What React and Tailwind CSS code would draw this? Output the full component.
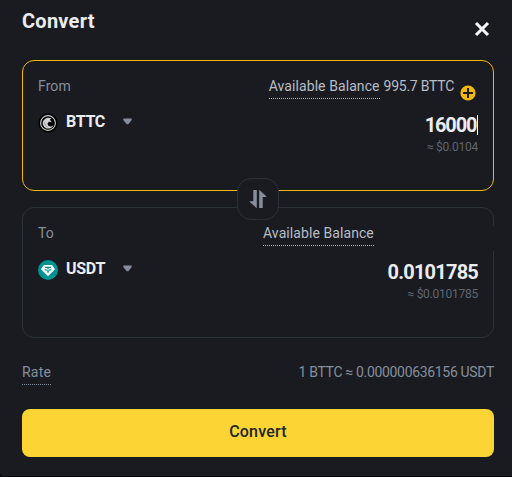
import React, { useState } from "react";

function BttcIcon() {
  return (
    <svg width="20" height="20" viewBox="0 0 20 20" fill="none" className="shrink-0">
      <circle cx="10" cy="10" r="9.7" fill="#020203" />
      <circle cx="10" cy="10" r="7.4" stroke="#c9c9cb" strokeWidth="1.1" />
      <path
        d="M13.6 5.500C11 4 8 4.600 6.500 6.400C5 7.500 4.300 9.500 4.900 11.400C5.700 14 8 15.800 10.800 15.600C13.200 15.400 15 13.900 15.300 12.300C13.500 14 10.800 13.800 9.900 12C9.200 10.500 9.700 9.300 11 8.900C12.200 8.500 13 9 13.200 9.800C13.800 8.600 13.100 7.200 11.600 6.900C12.200 6.300 13 5.900 13.600 5.500Z"
        fill="#d2d2d4"
      />
      <path d="M6.700 8.800C6.300 11.200 7.600 13.200 9.600 14.100" stroke="#77777a" strokeWidth="0.6" />
    </svg>
  );
}

function UsdtIcon() {
  return (
    <svg width="20" height="20" viewBox="0 0 20 20" fill="none" className="shrink-0">
      <circle cx="10" cy="10" r="10" fill="#009393" />
      <path d="M5.900 4.900H14.100L17 9.300L10 16.300L3 9.300Z" fill="#fff" />
      <path d="M7 6.700H13V8H10.700V9C12.500 9.100 13.600 9.400 13.600 9.900C13.600 10.400 12.500 10.700 10.700 10.800V12.700H9.300V10.800C7.500 10.700 6.400 10.400 6.400 9.900C6.400 9.400 7.500 9.100 9.300 9V8H7Z" fill="#009393" />
      <ellipse cx="10" cy="9.800" rx="2.500" ry="0.500" fill="#fff" />
    </svg>
  );
}

function Caret() {
  return (
    <svg width="9" height="7" viewBox="0 0 9 7" className="mb-1 shrink-0">
      <path d="M0.300 0.500H8.700V2L5.300 6.300H3.700L0.300 2Z" fill="#848e9c" />
    </svg>
  );
}

function SwapIcon() {
  return (
    <svg width="18" height="20" viewBox="0 0 18 20" fill="#848e9c">
      <path d="M4.300 1H7.800V19.300L0.800 13V12.200H4.300Z" />
      <path d="M10.200 0.700L17.300 7.200V8H13.700V19H10.200Z" />
    </svg>
  );
}

function CoinSelect({ icon, symbol }) {
  return (
    <button className="flex h-5 items-center">
      {icon}
      <span className="mb-[2px] ml-2 w-[57px] text-left text-base leading-5 font-bold tracking-[-0.3px] text-[#eaecef]">{symbol}</span>
      <Caret />
    </button>
  );
}

export default function App() {
  const [amount] = useState("16000");

  return (
    <div className="h-[477px] w-[512px] overflow-hidden bg-[#08080b] font-['Roboto','Liberation_Sans',sans-serif]">
      <div className="flex h-[476px] flex-col rounded-bl-[3px] bg-[#1a1b20] pr-[18px] pl-[22px]">
        {/* Header */}
        <div className="flex h-[60px] items-start justify-between">
          <h1 className="pt-[9px] text-xl leading-6 font-bold tracking-[0.25px] text-[#eaecef]">Convert</h1>
          <button className="mt-[21px] mr-1" aria-label="Close">
            <svg width="16" height="16" viewBox="0 0 16 16" fill="none">
              <path d="M2 2L14 14M14 2L2 14" stroke="#f4f5f6" strokeWidth="3.100" />
            </svg>
          </button>
        </div>

        {/* From */}
        <section className="h-[131px] shrink-0 rounded-xl border border-[#f0b90b] px-[15px] pt-[15px]">
          <div className="flex h-[37px] items-start justify-between text-sm leading-5">
            <span className="tracking-[0.1px] text-[#848e9c]">From</span>
            <div className="flex items-start text-[#b7bdc6]">
              <span className="border-b border-dotted border-[#b7bdc6] pb-[2px] tracking-[0.08px]">Available Balance</span>
              <span className="ml-1 tracking-[-0.25px]">995.7 BTTC</span>
              <svg width="16" height="16" viewBox="0 0 16 16" className="mt-[9px] mr-[2px] ml-[6px]">
                <circle cx="8" cy="8" r="7.600" fill="#f0b90b" />
                <path d="M8 3V13M3 8H13" stroke="#1a1b20" strokeWidth="2" />
              </svg>
            </div>
          </div>
          <div className="flex items-start justify-between">
            <CoinSelect icon={<BttcIcon />} symbol="BTTC" />
            <div className="text-right">
              <div className="flex h-6 items-center justify-end">
                <span className="text-xl leading-6 font-bold tracking-[-1.1px] text-[#eaecef]">{amount}</span>
                <span className="ml-[0.5px] h-5 w-px bg-white" />
              </div>
              <div className="mt-[2px] text-xs leading-4 tracking-[-0.25px] text-[#5e6673]">≈ $0.0104</div>
            </div>
          </div>
        </section>

        {/* Swap direction */}
        <div className="z-10 -my-[13px] flex h-[42px] w-[42px] shrink-0 items-center justify-center self-center rounded-[14px] border border-[#2b3139] bg-[#1a1b20]">
          <SwapIcon />
        </div>

        {/* To */}
        <section className="h-[131px] shrink-0 rounded-xl border border-[#2b3139] px-[15px] pt-[15px]">
          <div className="-mr-4 flex h-[37px] items-start text-sm leading-5">
            <span className="w-[225px] text-[#848e9c]">To</span>
            <div className="mt-[3px] flex h-[25px] flex-1 items-start bg-[#1a1b20]">
              <span className="-mt-[3px] border-b border-dotted border-[#b7bdc6] pb-[2px] tracking-[0.08px] text-[#b7bdc6]">
                Available Balance
              </span>
            </div>
          </div>
          <div className="flex items-start justify-between">
            <CoinSelect icon={<UsdtIcon />} symbol="USDT" />
            <div className="text-right">
              <div className="text-xl leading-6 font-bold tracking-[-0.8px] text-[#eaecef]">0.0101785</div>
              <div className="mt-[2px] text-xs leading-4 tracking-[-0.25px] text-[#5e6673]">≈ $0.0101785</div>
            </div>
          </div>
        </section>

        {/* Rate */}
        <div className="mt-6 flex h-[47px] shrink-0 items-start justify-between text-sm leading-5 text-[#848e9c]">
          <span className="border-b border-dotted border-[#848e9c] pb-[2px] tracking-[0.2px]">Rate</span>
          <span className="tracking-[-0.33px]">1 BTTC ≈ 0.000000636156 USDT</span>
        </div>

        <button className="h-12 shrink-0 rounded-lg bg-[#fcd535] pb-[3px] text-base font-medium tracking-[0.2px] text-[#202630]">
          Convert
        </button>
      </div>
    </div>
  );
}
